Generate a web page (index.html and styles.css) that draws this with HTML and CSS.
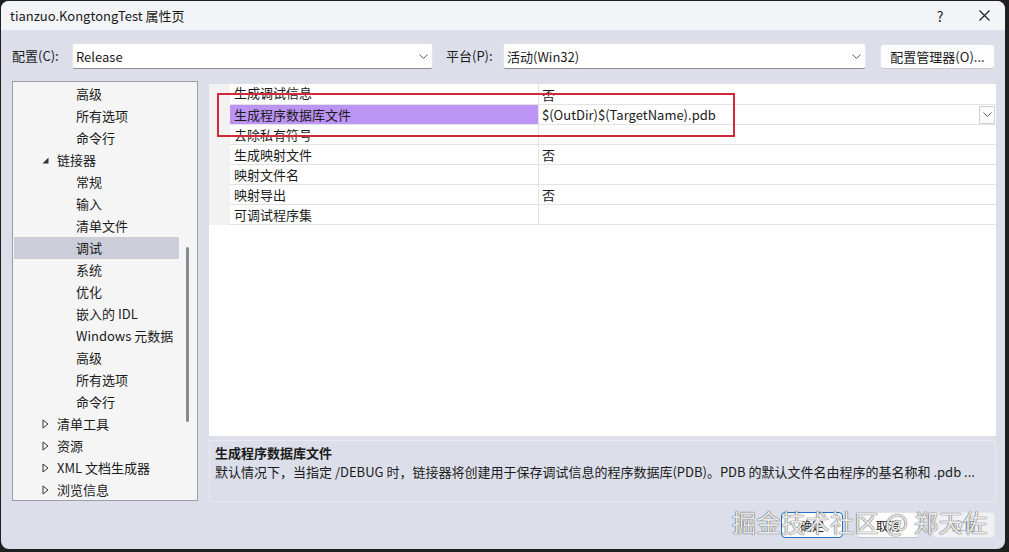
FILE: index.html
```html
<!DOCTYPE html>
<html lang="zh-CN">
<head>
  <meta charset="UTF-8">
  <title>tianzuo.KongtongTest 属性页</title>
  <link rel="stylesheet" href="styles.css">
</head>
<body>

  <div class="window">

    <!-- title bar -->
    <div class="titlebar">
      <span class="title">tianzuo.KongtongTest 属性页</span>
      <span class="cap-btn">?</span>
      <span class="cap-btn close">
        <svg width="11" height="11" viewBox="0 0 11 11"><path d="M0.5 0.5 L10.5 10.5 M10.5 0.5 L0.5 10.5" stroke="#1b1b1b" stroke-width="1.1" fill="none"/></svg>
      </span>
    </div>

    <div class="content">

      <!-- configuration row -->
      <div class="config-row">
        <span class="label label-config">配置(C):</span>
        <div class="combo combo-config">
          <span>Release</span>
          <svg class="chev" width="9" height="5" viewBox="0 0 9 5"><path d="M0.5 0.5 L4.5 4.5 L8.5 0.5" stroke="#606060" fill="none"/></svg>
        </div>
        <span class="label label-platform">平台(P):</span>
        <div class="combo combo-platform">
          <span>活动(Win32)</span>
          <svg class="chev" width="9" height="5" viewBox="0 0 9 5"><path d="M0.5 0.5 L4.5 4.5 L8.5 0.5" stroke="#606060" fill="none"/></svg>
        </div>
        <button class="btn btn-manager">配置管理器(O)...</button>
      </div>

      <div class="main">

        <!-- tree -->
        <div class="tree">
          <div class="tree-list">
            <div class="node lv2">高级</div>
            <div class="node lv2">所有选项</div>
            <div class="node lv2">命令行</div>
            <div class="node lv1"><svg class="arrow" width="7" height="7" viewBox="0 0 7 7"><path d="M6.5 0.5 L6.5 6.5 L0.5 6.5 Z" fill="#333"/></svg>链接器</div>
            <div class="node lv2">常规</div>
            <div class="node lv2">输入</div>
            <div class="node lv2">清单文件</div>
            <div class="node lv2 selected">调试</div>
            <div class="node lv2">系统</div>
            <div class="node lv2">优化</div>
            <div class="node lv2">嵌入的 IDL</div>
            <div class="node lv2">Windows 元数据</div>
            <div class="node lv2">高级</div>
            <div class="node lv2">所有选项</div>
            <div class="node lv2">命令行</div>
            <div class="node lv1"><svg class="arrow" width="7" height="10" viewBox="0 0 7 10"><path d="M1 1 L6 5 L1 9 Z" stroke="#333" fill="none"/></svg>清单工具</div>
            <div class="node lv1"><svg class="arrow" width="7" height="10" viewBox="0 0 7 10"><path d="M1 1 L6 5 L1 9 Z" stroke="#333" fill="none"/></svg>资源</div>
            <div class="node lv1"><svg class="arrow" width="7" height="10" viewBox="0 0 7 10"><path d="M1 1 L6 5 L1 9 Z" stroke="#333" fill="none"/></svg>XML 文档生成器</div>
            <div class="node lv1"><svg class="arrow" width="7" height="10" viewBox="0 0 7 10"><path d="M1 1 L6 5 L1 9 Z" stroke="#333" fill="none"/></svg>浏览信息</div>
          </div>
          <div class="scroll-track"><div class="scroll-thumb"></div></div>
        </div>

        <div class="right">
          <!-- property grid -->
          <div class="grid">
            <div class="row first"><div class="gutter"></div><div class="name">生成调试信息</div><div class="value">否</div></div>
            <div class="row selected"><div class="gutter"></div><div class="name">生成程序数据库文件</div><div class="value">$(OutDir)$(TargetName).pdb
              <span class="drop"><svg width="9" height="5" viewBox="0 0 9 5"><path d="M0.5 0.5 L4.5 4.5 L8.5 0.5" stroke="#606060" fill="none"/></svg></span></div></div>
            <div class="row"><div class="gutter"></div><div class="name">去除私有符号</div><div class="value"></div></div>
            <div class="row"><div class="gutter"></div><div class="name">生成映射文件</div><div class="value">否</div></div>
            <div class="row"><div class="gutter"></div><div class="name">映射文件名</div><div class="value"></div></div>
            <div class="row"><div class="gutter"></div><div class="name">映射导出</div><div class="value">否</div></div>
            <div class="row"><div class="gutter"></div><div class="name">可调试程序集</div><div class="value"></div></div>
          </div>

          <!-- description -->
          <div class="desc">
            <div class="desc-title">生成程序数据库文件</div>
            <div class="desc-text">默认情况下，当指定 /DEBUG 时，链接器将创建用于保存调试信息的程序数据库(PDB)。PDB 的默认文件名由程序的基名称和 .pdb ...</div>
          </div>
        </div>
      </div>

      <!-- dialog buttons -->
      <div class="buttons">
        <button class="btn btn-dlg default">确定</button>
        <button class="btn btn-dlg">取消</button>
        <button class="btn btn-dlg disabled">应用</button>
      </div>
    </div>

    <!-- red annotation box -->
    <div class="mark"></div>

    <div class="watermark">掘金技术社区 @ 郑天佐</div>
  </div>

</body>
</html>
```

FILE: styles.css
```css
body {
  margin: 0;
  background: #1f1f1f;
  font-family: "Noto Sans CJK SC", "Noto Sans", sans-serif;
  font-size: 13px;
  color: #1b1b1b;
}

.window {
  position: relative;
  margin: 1px 0 0 1px;
  width: 1004px;
  height: 548px;
  border-radius: 8px;
  overflow: hidden;
  background: #dcdfe9;
}

.titlebar {
  height: 29px;
  background: #f3f4f7;
  display: flex;
  align-items: center;
  padding-left: 9px;
}

.title {
  flex: 1;
  font-size: 13px;
}

.cap-btn {
  width: 46px;
  text-align: center;
  font-size: 14px;
}

.cap-btn.close {
  width: 42px;
  display: flex;
  justify-content: center;
}

.content {
  padding: 0 9px 0 11px;
}

.config-row {
  margin-top: 13px;
  height: 26px;
  display: flex;
  align-items: center;
}

.label {
  line-height: 26px;
}

.label-config {
  width: 60px;
}

.label-platform {
  width: 57px;
  margin-left: 13px;
}

.combo {
  height: 26px;
  box-sizing: border-box;
  background: #fff;
  border: 1px solid #e3e4ea;
  border-bottom-color: #8d8f96;
  border-radius: 3px;
  display: flex;
  align-items: center;
  justify-content: space-between;
  padding: 0 4px 0 3px;
}

.combo-config {
  width: 361px;
}

.combo-platform {
  width: 363px;
}

.btn {
  font-family: inherit;
  font-size: 13px;
  color: #1b1b1b;
  background: #fdfdfd;
  border: 1px solid #e2e3e8;
  border-bottom-color: #c7c8ce;
  border-radius: 4px;
  padding: 0;
}

.btn-manager {
  margin-left: 14px;
  width: 115px;
  height: 25px;
}

.main {
  margin-top: 12px;
  display: flex;
}

/* tree */
.tree {
  width: 186px;
  height: 420px;
  box-sizing: border-box;
  border: 1px solid #9c9ea6;
  background: #f5f5f6;
  display: flex;
  overflow: hidden;
}

.tree-list {
  width: 165px;
  margin-left: 1px;
  padding-top: 1px;
}

.node {
  height: 22px;
  line-height: 22px;
  white-space: nowrap;
  display: flex;
  align-items: center;
}

.node.lv2 {
  padding-left: 62px;
}

.node.lv1 {
  padding-left: 28px;
}

.arrow {
  width: 7px;
  margin-right: 8px;
}

.node.selected {
  background: #cbcdd9;
}

.scroll-track {
  width: 18px;
  padding-top: 165px;
}

.scroll-thumb {
  margin-left: 7px;
  width: 3px;
  height: 175px;
  background: #8a8b90;
  border-radius: 2px;
}

/* right side */
.right {
  margin-left: 11px;
  width: 787px;
  padding-top: 3px;
}

.grid {
  height: 352px;
  background: #fff;
  overflow: hidden;
}

.row {
  display: flex;
  height: 20px;
}

.row.first {
  height: 21px;
}

.gutter {
  width: 21px;
  background: #f2f2f3;
}

.name,
.value {
  box-sizing: border-box;
  border-bottom: 1px solid #e3e3e6;
  line-height: 19px;
  padding-left: 4px;
  white-space: nowrap;
}

.row.first .name,
.row.first .value {
  line-height: 17px;
}

.name {
  width: 309px;
  border-right: 1px solid #e3e3e6;
}

.value {
  flex: 1;
  display: flex;
  align-items: center;
  justify-content: space-between;
  padding-right: 1px;
  padding-left: 3px;
}

.row.selected .name {
  background: #bb94f4;
}

.drop {
  width: 16px;
  height: 18px;
  box-sizing: border-box;
  border: 1px solid #cfd0d4;
  display: flex;
  align-items: center;
  justify-content: center;
  background: #fbfbfb;
}

.desc {
  margin-top: 4px;
  height: 62px;
  box-sizing: border-box;
  border: 1px solid #e8eaf0;
  padding: 2px 0 0 5px;
  line-height: 19px;
  white-space: nowrap;
}

.desc-title {
  font-weight: bold;
}

.buttons {
  margin-top: 10px;
  display: flex;
  justify-content: flex-end;
  gap: 14px;
  padding-right: 1px;
}

.btn-dlg {
  width: 62px;
  height: 26px;
  font-size: 12px;
}

.btn-dlg.default {
  border-color: #1f6fc5;
}

.btn-dlg.disabled {
  background: #f0f1f5;
  color: #9a9ba1;
  border-color: #e6e7ec;
}

/* overlays */
.mark {
  position: absolute;
  left: 216px;
  top: 92px;
  width: 514px;
  height: 40px;
  border: 2px solid #d1283a;
}

.watermark {
  position: absolute;
  left: 731px;
  top: 505px;
  font-size: 24px;
  line-height: 32px;
  letter-spacing: 0.5px;
  color: rgba(255, 255, 255, 0.9);
  text-shadow: 0 0 1px #4a4a4a, 0 0 1px #4a4a4a;
  white-space: nowrap;
}
```
